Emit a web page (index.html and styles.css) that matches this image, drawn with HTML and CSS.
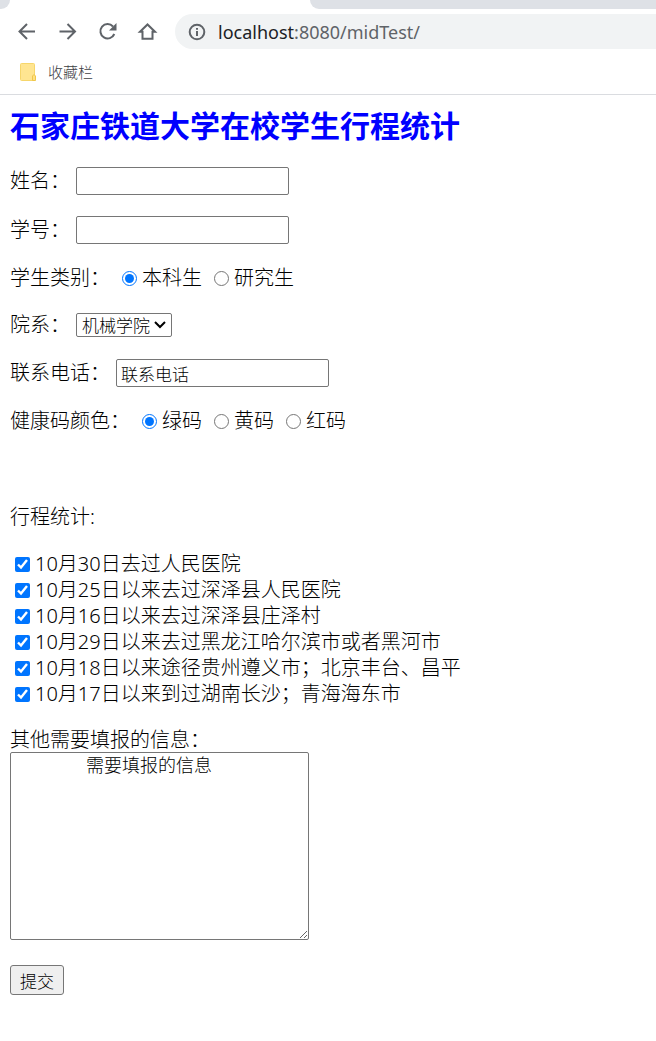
FILE: index.html
```html
<!DOCTYPE html>
<html lang="zh-CN">
<head>
  <meta charset="UTF-8">
  <meta name="viewport" content="width=device-width, initial-scale=1.0">
  <title>石家庄铁道大学在校学生行程统计</title>
  <link rel="stylesheet" href="styles.css">
</head>
<body>
  <header class="browser">
    <div class="tabs">
      <div class="tab-left"></div>
      <div class="tab-right"></div>
    </div>
    <nav class="toolbar">
      <button class="icon-btn" type="button" aria-label="后退">
        <svg viewBox="0 0 24 24"><path d="M20 11.500H5M12 4L4.500 11.500l7.500 7.500"/></svg>
      </button>
      <button class="icon-btn" type="button" aria-label="前进">
        <svg viewBox="0 0 24 24"><path d="M4.500 11.500h15M12.500 4l7.500 7.500-7.500 7.500"/></svg>
      </button>
      <button class="icon-btn" type="button" aria-label="刷新">
        <svg viewBox="0 0 24 24"><path d="M18 6.500A7.200 7.200 0 1 0 19.300 14"/><path class="solid" d="M21.500 3v7.500H14z"/></svg>
      </button>
      <button class="icon-btn" type="button" aria-label="主页">
        <svg viewBox="0 0 24 24"><path d="M5 11.700h2.500v7h10v-7H20L12.500 4.500z"/></svg>
      </button>
      <div class="address">
        <svg class="info" viewBox="0 0 18 18"><circle cx="9" cy="9" r="7.300"/><path d="M9 8v5M9 5v1.800"/></svg>
        <a class="url" href="#"><span class="host">localhost</span>:8080/midTest/</a>
      </div>
    </nav>
    <div class="bookmarks">
      <a class="bookmark" href="#">
        <svg class="folder" viewBox="0 0 16 18"><rect x="0.500" y="0.500" width="14" height="17" rx="1" fill="#ffe591" stroke="#f6d66b"/><path d="M12.500 17.500v-4.500l1.500-1.500 1.500 1.500v4.500z" fill="#ffe082" stroke="#efc64b"/></svg>
        收藏栏
      </a>
    </div>
  </header>

  <main>
    <h1>石家庄铁道大学在校学生行程统计</h1>
    <form>
      <div class="row">
        <label for="name">姓名：</label>
        <input class="text" type="text" id="name">
      </div>
      <div class="row">
        <label for="number">学号：</label>
        <input class="text" type="text" id="number">
      </div>
      <div class="row options" role="radiogroup" aria-labelledby="type-label">
        <span id="type-label">学生类别：</span>
        <label class="option"><input type="radio" name="type" checked>本科生</label>
        <label class="option"><input type="radio" name="type">研究生</label>
      </div>
      <div class="row">
        <label for="college">院系：</label>
        <select id="college">
          <option>机械学院</option>
        </select>
      </div>
      <div class="row">
        <label for="phone">联系电话：</label>
        <input class="text" type="text" id="phone" value="联系电话">
      </div>
      <div class="row options" role="radiogroup" aria-labelledby="code-label">
        <span id="code-label">健康码颜色：</span>
        <label class="option"><input type="radio" name="code" checked>绿码</label>
        <label class="option"><input type="radio" name="code">黄码</label>
        <label class="option"><input type="radio" name="code">红码</label>
      </div>

      <p class="trip-title">行程统计:</p>
      <div class="trips">
        <label class="option"><input type="checkbox" checked>10月30日去过人民医院</label>
        <label class="option"><input type="checkbox" checked>10月25日以来去过深泽县人民医院</label>
        <label class="option"><input type="checkbox" checked>10月16日以来去过深泽县庄泽村</label>
        <label class="option"><input type="checkbox" checked>10月29日以来去过黑龙江哈尔滨市或者黑河市</label>
        <label class="option"><input type="checkbox" checked>10月18日以来途径贵州遵义市；北京丰台、昌平</label>
        <label class="option"><input type="checkbox" checked>10月17日以来到过湖南长沙；青海海东市</label>
      </div>

      <div class="other">
        <label for="other">其他需要填报的信息：</label>
        <textarea id="other">需要填报的信息</textarea>
      </div>
      <button class="submit" type="submit">提交</button>
    </form>
  </main>
</body>
</html>
```

FILE: styles.css
```css
* { box-sizing: border-box; margin: 0; padding: 0; }
body {
  background: #fff;
  color: #000;
  font-family: "Noto Sans", "Noto Sans CJK SC", sans-serif;
  font-size: 20px;
  font-weight: 300;
  line-height: 26px;
}
input, select, textarea, button {
  font-family: inherit;
  font-size: 17px;
  font-weight: inherit;
  color: #000;
}

/* browser bar */
.browser {
  border-bottom: 1px solid #dadce0;
}
.tabs {
  display: flex;
  justify-content: space-between;
  gap: 300px;
  height: 9px;
}
.tab-left, .tab-right {
  background: #dee1e6;
}
.tab-left {
  width: 10px;
  border-bottom-right-radius: 9px;
}
.tab-right {
  flex: 1;
  border-bottom-left-radius: 9px;
}
.toolbar {
  display: flex;
  align-items: center;
  gap: 16px;
  padding: 5px 0 0 15px;
}
.icon-btn {
  width: 24px;
  height: 24px;
  border: none;
  background: none;
}
.icon-btn svg {
  display: block;
  width: 24px;
  height: 24px;
  fill: none;
  stroke: #5f6368;
  stroke-width: 2;
}
.icon-btn .solid {
  fill: #5f6368;
  stroke: none;
}
.address {
  flex: 1;
  display: flex;
  align-items: center;
  gap: 12px;
  height: 35px;
  padding-left: 13px;
  background: #f1f3f4;
  border-radius: 18px 0 0 18px;
}
.info {
  width: 18px;
  height: 18px;
  fill: none;
  stroke: #5f6368;
  stroke-width: 2;
}
.url {
  color: #5f6368;
  font-size: 18px;
  font-weight: 400;
  text-decoration: none;
}
.host {
  color: #202124;
}
.bookmarks {
  display: flex;
  align-items: center;
  height: 45px;
  padding-left: 20px;
}
.bookmark {
  display: flex;
  align-items: center;
  gap: 12px;
  color: #3c4043;
  font-size: 15px;
  text-decoration: none;
}
.folder {
  width: 16px;
  height: 18px;
}

/* page */
main {
  padding: 11px 10px;
}
h1 {
  margin-bottom: 21px;
  color: #00f;
  font-size: 30px;
  line-height: 40px;
}
form {
  display: flex;
  flex-direction: column;
  align-items: flex-start;
  gap: 21px;
}
.row {
  display: flex;
  align-items: center;
  gap: 6px;
}
.options {
  gap: 12px;
}
.option {
  display: flex;
  align-items: center;
  gap: 5px;
}
.option input {
  width: 15px;
  height: 15px;
}
.text {
  width: 213px;
  height: 28px;
  padding: 0 4px;
  border: 1px solid #767676;
  border-radius: 2px;
}
select {
  width: 96px;
  height: 24px;
  padding-left: 5px;
  border: 1px solid #767676;
  border-radius: 2px;
  appearance: none;
  background: #fff url("data:image/svg+xml,%3Csvg xmlns='http://www.w3.org/2000/svg' width='12' height='8'%3E%3Cpath d='M1 1l5 5 5-5' fill='none' stroke='%23000' stroke-width='2'/%3E%3C/svg%3E") no-repeat right 5px center;
}
.trip-title {
  margin-top: 49px;
}
.trips {
  padding-left: 5px;
}
.other {
  display: flex;
  flex-direction: column;
  line-height: 24px;
}
textarea {
  width: 299px;
  height: 188px;
  padding: 0 3px;
  border: 1px solid #767676;
  border-radius: 2px;
  font-size: 18px;
  line-height: 24px;
  text-indent: 72px;
}
.submit {
  margin-top: 4px;
  height: 30px;
  padding: 0 9px;
  border: 1px solid #767676;
  border-radius: 3px;
  background: #efefef;
}
```
